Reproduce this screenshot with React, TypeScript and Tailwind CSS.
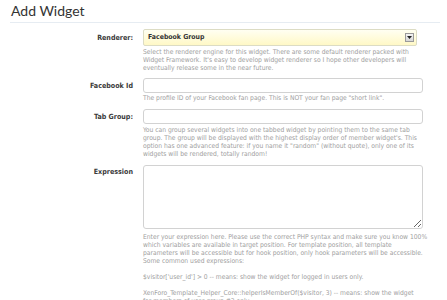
import React from "react";

const desc = "text-[#a0a0a0] text-[6.7px] leading-[8px] whitespace-nowrap";
const label = "text-right font-bold text-[#3a3a3a] text-[7.1px] leading-[9px]";

function Lines({ lines }: { lines: string[] }) {
  return (
    <div className={desc}>
      {lines.map((l, i) => (
        <div key={i} className="h-[8px]">
          {l}
        </div>
      ))}
    </div>
  );
}

export default function App() {
  return (
    <div
      className="w-[447px] h-[300px] overflow-hidden bg-white"
      style={{ fontFamily: "'DejaVu Sans Condensed', 'DejaVu Sans', sans-serif" }}
    >
      <div className="pl-[10px] pr-[7px]">
        <div className="h-[23px] border-b border-[#e6ecf2] pl-px pt-[1px]">
          <h1
            className="text-[14px] leading-[20px] text-[#333]"
            style={{ fontFamily: "Lato, 'Open Sans', sans-serif" }}
          >
            Add Widget
          </h1>
        </div>
      </div>

      <div className="grid grid-cols-[133px_280px] gap-x-[10px]">
        {/* Renderer */}
        <div className={`${label} pt-[10px]`}>Renderer:</div>
        <div className="pt-[6px]">
          <div className="flex h-[17px] w-[274px] items-center justify-between rounded-[2px] border border-[#dcdcc4] bg-gradient-to-b from-[#fffff2] to-[#fff8c6] pl-[4px] pr-[2px]">
            <span className="font-bold text-[6.9px] text-[#333]">Facebook Group</span>
            <span className="flex h-[9px] w-[9px] items-center justify-center border border-[#9a9a9a] bg-gradient-to-b from-[#f4f4f4] to-[#d6d6d6]">
              <svg width="5" height="3" viewBox="0 0 5 3">
                <path d="M0 0 H5 L2.5 3 Z" fill="#222" />
              </svg>
            </span>
          </div>
          <div className="mt-[2px]">
            <Lines
              lines={[
                "Select the renderer engine for this widget. There are some default renderer packed with",
                "Widget Framework. It's easy to develop widget renderer so I hope other developers will",
                "eventually release some in the near future.",
              ]}
            />
          </div>
        </div>

        {/* Facebook Id */}
        <div className={`${label} pt-[9px]`}>Facebook Id</div>
        <div className="pt-[6px]">
          <input
            type="text"
            className="block h-[15px] w-[280px] rounded-[3px] border border-[#d2d2d2] bg-white outline-none"
          />
          <div className="mt-[1px]">
            <Lines lines={['The profile ID of your Facebook fan page. This is NOT your fan page "short link".']} />
          </div>
        </div>

        {/* Tab Group */}
        <div className={`${label} pt-[10px]`}>Tab Group:</div>
        <div className="pt-[7px]">
          <input
            type="text"
            className="block h-[15px] w-[280px] rounded-[3px] border border-[#d2d2d2] bg-white outline-none"
          />
          <div className="mt-[2px]">
            <Lines
              lines={[
                "You can group several widgets into one tabbed widget by pointing them to the same tab",
                "group. The group will be displayed with the highest display order of member widget's. This",
                'option has one advanced feature: if you name it "random" (without quote), only one of its',
                "widgets will be rendered, totally random!",
              ]}
            />
          </div>
        </div>

        {/* Expression */}
        <div className={`${label} pt-[9px]`}>Expression</div>
        <div className="pt-[7px]">
          <textarea className="block h-[64px] w-[280px] rounded-[3px] border border-[#d2d2d2] bg-white outline-none" />
          <div className="mt-[4px]">
            <Lines
              lines={[
                "Enter your expression here. Please use the correct PHP syntax and make sure you know 100%",
                "which variables are available in target position. For template position, all template",
                "parameters will be accessible but for hook position, only hook parameters will be accessible.",
                "Some common used expressions:",
                "",
                "$visitor['user_id'] > 0 -- means: show the widget for logged in users only.",
                "",
                "XenForo_Template_Helper_Core::helperIsMemberOf($visitor, 3) -- means: show the widget",
                "for members of user group #3 only.",
              ]}
            />
          </div>
        </div>
      </div>
    </div>
  );
}
